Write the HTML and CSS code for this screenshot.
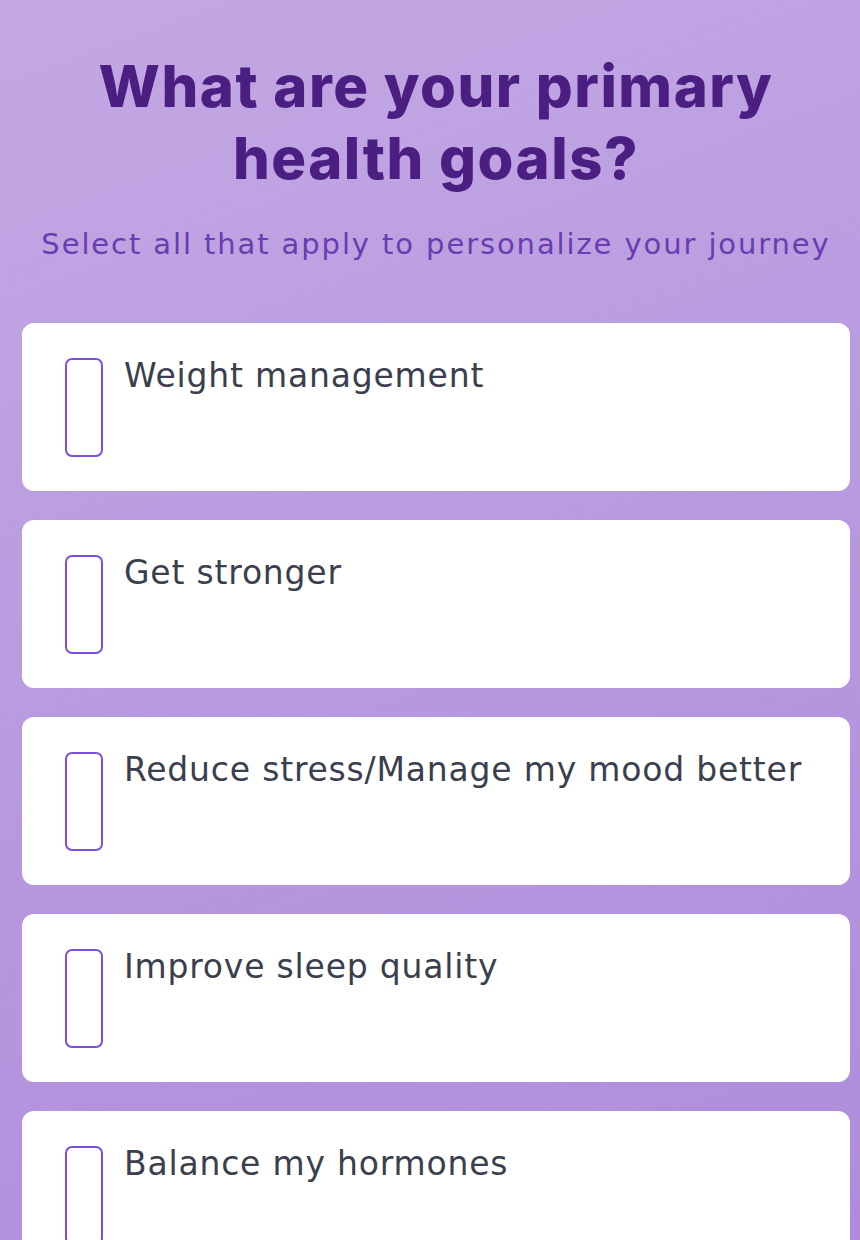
FILE: index.html
```html
<!DOCTYPE html>
<html lang="en">
<head>
<meta charset="utf-8">
<title>Health goals</title>
<link rel="stylesheet" href="styles.css">
</head>
<body>
<main class="page">
  <header class="intro">
    <h1 class="title">What are your primary health goals?</h1>
    <p class="subtitle">Select all that apply to personalize your journey</p>
  </header>
  <ul class="options">
    <li class="option"><span class="box"></span><span class="label">Weight management</span></li>
    <li class="option"><span class="box"></span><span class="label">Get stronger</span></li>
    <li class="option"><span class="box"></span><span class="label">Reduce stress/Manage my mood better</span></li>
    <li class="option"><span class="box"></span><span class="label">Improve sleep quality</span></li>
    <li class="option"><span class="box"></span><span class="label">Balance my hormones</span></li>
  </ul>
</main>
</body>
</html>
```
FILE: styles.css
```css
html, body {
  margin: 0;
  padding: 0;
  height: 100%;
}
body {
  background: linear-gradient(160deg, #c3a8e3 0%, #b99be0 45%, #ae8cdb 100%);
  font-family: "DejaVu Sans", "Noto Sans", sans-serif;
  overflow: hidden;
}
.page {
  padding: 50px 10px 0 22px;
}
.intro {
  text-align: center;
}
.title {
  margin: 0 auto;
  width: 720px;
  font-family: "Inter", "Noto Sans", sans-serif;
  font-size: 58px;
  line-height: 72px;
  font-weight: 800;
  color: #4b1e82;
  letter-spacing: 1.5px;
}
.subtitle {
  margin: 30px 0 0;
  font-size: 29px;
  line-height: 40px;
  font-weight: 400;
  letter-spacing: 1.9px;
  color: #6a3cb0;
}
.options {
  list-style: none;
  margin: 59px 0 0;
  padding: 0;
  display: flex;
  flex-direction: column;
  gap: 29px;
}
.option {
  background: #ffffff;
  border-radius: 12px;
  height: 168px;
  box-sizing: border-box;
  padding: 35px 40px 34px 43px;
  display: flex;
  align-items: stretch;
  gap: 21px;
}
.box {
  flex: 0 0 38px;
  box-sizing: border-box;
  border: 2px solid #7b4fe0;
  border-radius: 7px;
}
.label {
  font-size: 33px;
  line-height: 36px;
  font-weight: 400;
  letter-spacing: 0.8px;
  color: #3a3f4d;
}
```
